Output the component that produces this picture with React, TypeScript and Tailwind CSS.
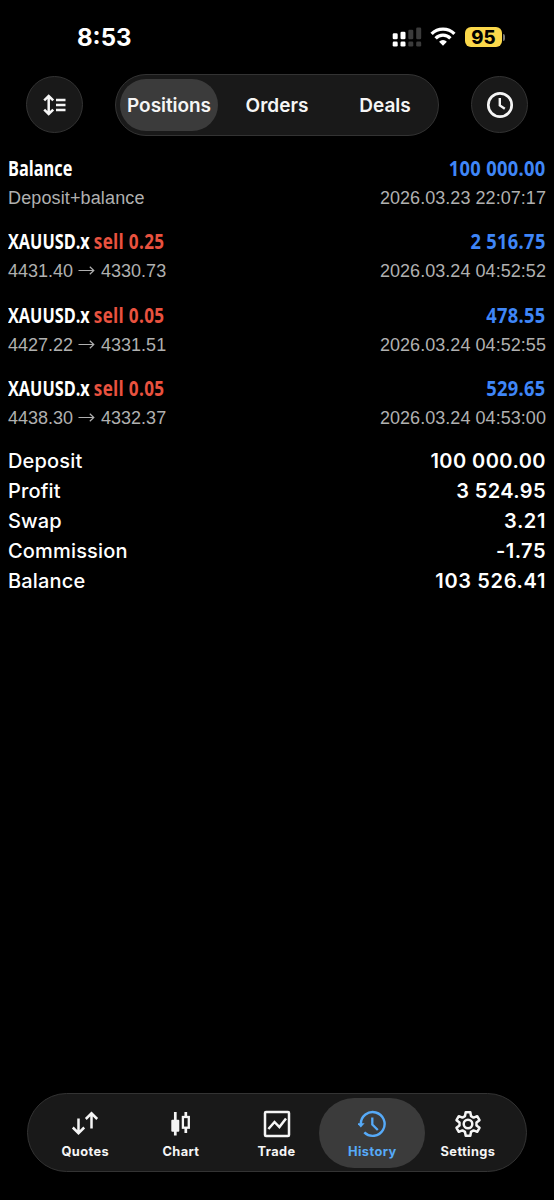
import React from "react";

type Deal = { name: string; side?: string; value: string; detail: React.ReactNode; time: string };

const Arrow = () => (
  <svg width="18" height="12" viewBox="0 0 18 12" className="mx-[5px] mb-[3px] inline-block" fill="none" stroke="#b0b0b0" strokeWidth="1.2">
    <path d="M0.500 6.500H15.700M11.800 2.700L15.800 6.500L11.800 10.300" />
  </svg>
);

const deals: Deal[] = [
  { name: "Balance", value: "100 000.00", detail: <span className="tracking-[0.130px]">Deposit+balance</span>, time: "2026.03.23 22:07:17" },
  { name: "XAUUSD.x", side: "sell 0.25", value: "2 516.75", detail: <>4431.40<Arrow />4330.73</>, time: "2026.03.24 04:52:52" },
  { name: "XAUUSD.x", side: "sell 0.05", value: "478.55", detail: <>4427.22<Arrow />4331.51</>, time: "2026.03.24 04:52:55" },
  { name: "XAUUSD.x", side: "sell 0.05", value: "529.65", detail: <>4438.30<Arrow />4332.37</>, time: "2026.03.24 04:53:00" },
];

const totals = [
  ["Deposit", "100 000.00", "tracking-[0.450px]"],
  ["Profit", "3 524.95", "tracking-[0.400px]"],
  ["Swap", "3.21", "tracking-[0.600px]"],
  ["Commission", "-1.75", "tracking-[0.500px]"],
  ["Balance", "103 526.41", "tracking-[0.650px]"],
];

const StatusBar = () => (
  <div className="flex h-[74px] items-start justify-between pl-[77px] pr-[49px]">
    <span className="mt-[22px] text-[24px] font-bold leading-8 tracking-[0px]">8:53</span>
    <div className="mt-[26px] flex items-center">
      <svg width="30" height="22" viewBox="0 0 30 22" className="mr-[8px]">
        <g fill="#fff">
          <rect x="0.700" y="7.300" width="5" height="6" rx="1.300" />
          <rect x="8.500" y="5.800" width="5" height="7.500" rx="1.300" />
          <rect x="0.700" y="15.600" width="5" height="5" rx="1.300" />
          <rect x="8.500" y="15.600" width="5" height="5" rx="1.300" />
        </g>
        <g fill="#3b3b3b">
          <rect x="16.300" y="3.800" width="5" height="9.500" rx="1.300" />
          <rect x="24.200" y="1.500" width="5" height="11.800" rx="1.300" />
          <rect x="16.300" y="15.600" width="5" height="5" rx="1.300" />
          <rect x="24.200" y="15.600" width="5" height="5" rx="1.300" />
        </g>
      </svg>
      <svg width="26" height="20" viewBox="0 0 26 20" className="mr-[9px]" fill="none" stroke="#fff" strokeWidth="3.300">
        <path d="M1.600 6.900A16.200 16.200 0 0 1 24.400 6.900" />
        <path d="M5.600 11.300A10.400 10.400 0 0 1 20.400 11.300" />
        <path d="M9.100 14.700A5.600 5.600 0 0 1 16.900 14.700L13 18.700Z" fill="#fff" stroke="none" />
      </svg>
      <div className="flex h-5 w-[37px] items-center justify-center rounded-[6px] bg-[#fbd84b] text-[18.500px] font-extrabold leading-none text-black">95</div>
      <div className="ml-[1px] h-[7px] w-[2px] rounded-r-full bg-[#777]" />
    </div>
  </div>
);

const SortIcon = () => (
  <svg width="24" height="22" viewBox="0 0 24 22" fill="none" stroke="#f5f5f5" strokeWidth="2.500">
    <path d="M5.700 2V20M1.200 6.300L5.700 2L10.200 6.300M1.200 15.700L5.700 20L10.200 15.700M13 6H22.500M13 11H22.500M13 16H22.500" />
  </svg>
);

const ClockIcon = () => (
  <svg width="28" height="28" viewBox="0 0 28 28" fill="none" stroke="#f5f5f5" strokeWidth="2.700">
    <circle cx="14" cy="14" r="11.700" />
    <path d="M13.800 7V14.400L18.800 17.800" strokeWidth="2.400" />
  </svg>
);

const Header = () => (
  <div className="flex h-[62px] items-center px-[26px]">
    <button className="mb-[1px] flex size-[57px] items-center justify-center rounded-full border border-[#333] bg-[#191919]"><SortIcon /></button>
    <div className="ml-[32px] flex h-[62px] w-[324px] items-center rounded-full border border-[#333] bg-[#191919] pl-[4px] text-[19px] font-semibold text-[#f5f5f5]">
      <span className="flex h-[52px] w-[98px] items-center justify-center rounded-full bg-[#3b3b3b] pt-[2px] tracking-[-0.060px]">Positions</span>
      <span className="flex w-[118px] justify-center pt-[2px]">Orders</span>
      <span className="flex w-[98px] justify-center pt-[2px]">Deals</span>
    </div>
    <button className="mb-[1px] ml-[32px] flex size-[57px] items-center justify-center rounded-full border border-[#333] bg-[#191919]"><ClockIcon /></button>
  </div>
);

const DealRow = ({ d }: { d: Deal }) => (
  <div className="h-[73.400px]">
    <div className="flex h-[29px] items-center justify-between whitespace-nowrap font-['Open_Sans'] text-[22px] font-bold">
      <span className="origin-left scale-x-[0.740]">
        {d.name}{d.side && <> <span className="inline-block origin-left scale-x-[1.050] tracking-[0.400px] text-[#e9523f]">{d.side}</span></>}
      </span>
      <span className="origin-right scale-x-[0.830] tracking-[0.400px] text-[#3f86f7]">{d.value}</span>
    </div>
    <div className="mt-[2px] flex h-[29px] items-center justify-between whitespace-nowrap font-['Liberation_Sans'] text-[18px] text-[#b0b0b0]">
      <span className="flex items-center">{d.detail}</span>
      <span className="tracking-[0.050px]">{d.time}</span>
    </div>
  </div>
);

const QuotesIcon = () => (
  <svg width="28" height="28" viewBox="0 0 28 28" fill="none" stroke="#f5f5f5" strokeWidth="2.500">
    <path d="M7.500 8.500V23M1.800 17.500L7.500 23.200L13.200 17.500M20.500 18.500V3.500M14.800 9L20.500 3.300L26.200 9" />
  </svg>
);
const CandleIcon = () => (
  <svg width="28" height="28" viewBox="0 0 28 28" fill="none" stroke="#f5f5f5" strokeWidth="2.700">
    <path d="M8.300 2V25.500M18.800 2V7M18.800 18V23" />
    <rect x="4.300" y="9.700" width="8" height="12" rx="1" fill="#f5f5f5" stroke="none" />
    <rect x="15.900" y="7" width="5.900" height="10.700" strokeWidth="2.300" />
  </svg>
);
const TradeIcon = () => (
  <svg width="28" height="28" viewBox="0 0 28 28" fill="none" stroke="#f5f5f5" strokeWidth="2.500">
    <rect x="2" y="2" width="24" height="24" rx="1" />
    <path d="M5.400 19L11.500 12L16.400 17L23 8.500" />
  </svg>
);
const HistoryIcon = () => (
  <svg width="28" height="28" viewBox="0 0 28 28" fill="none" stroke="#56aaf8" strokeWidth="2.400">
    <path d="M2.800 14A11.900 11.900 0 1 1 6.300 22.400" />
    <path d="M-0.800 13.300H6.600L2.800 17.500Z" fill="#56aaf8" stroke="none" />
    <path d="M14.300 7.500V14.500L19.800 20" strokeWidth="2.300" />
  </svg>
);
const SettingsIcon = () => (
  <svg width="28" height="28" viewBox="0 0 28 28" fill="none" stroke="#f5f5f5" strokeWidth="2.500" strokeLinejoin="round">
    <path d="M11.700 2.300H16.300L17 6.100L19.600 7.600L23.200 6.200L25.500 10.200L22.500 12.600V15.400L25.500 17.800L23.200 21.800L19.600 20.400L17 21.900L16.300 25.700H11.700L11 21.900L8.400 20.400L4.800 21.800L2.500 17.800L5.500 15.400V12.600L2.500 10.200L4.800 6.200L8.400 7.600L11 6.100Z" />
    <circle cx="14" cy="14" r="4.300" />
  </svg>
);

const tabs = [
  { label: "Quotes", icon: <QuotesIcon /> },
  { label: "Chart", icon: <CandleIcon /> },
  { label: "Trade", icon: <TradeIcon /> },
  { label: "History", icon: <HistoryIcon />, active: true },
  { label: "Settings", icon: <SettingsIcon /> },
];

export default function App() {
  return (
    <div className="flex h-[1200px] w-[554px] flex-col overflow-hidden bg-black font-['Inter',sans-serif] text-white">
      <StatusBar />
      <Header />
      <main className="flex-1 px-2 pt-[17px]">
        {deals.map((d, i) => <DealRow key={i} d={d} />)}
        <div className="-mt-[1px]">
          {totals.map(([k, v, tracking]) => (
            <div key={k} className="flex h-[30px] items-center justify-between text-[20px]">
              <span className="font-medium tracking-[0.170px]">{k}</span>
              <span className={`font-semibold ${tracking}`}>{v}</span>
            </div>
          ))}
        </div>
      </main>
      <nav className="mx-[27px] mb-[28px] flex h-[79px] items-center rounded-full border border-[#333] bg-[#191919] px-[4px]">
        {tabs.map((t) => (
          <div key={t.label} className="flex w-[95.700px] shrink-0 justify-center first:ml-[5.400px]">
            <div className={t.active ? "flex h-[70px] w-[106px] shrink-0 flex-col items-center rounded-full bg-[#3b3b3b] pt-[12px] text-[#56aaf8]" : "flex h-[70px] flex-col items-center pt-[12px] text-[#f5f5f5]"}>
              {t.icon}
              <span className="text-[12.800px] font-bold leading-[27px] tracking-[0.400px]">{t.label}</span>
            </div>
          </div>
        ))}
      </nav>
    </div>
  );
}
